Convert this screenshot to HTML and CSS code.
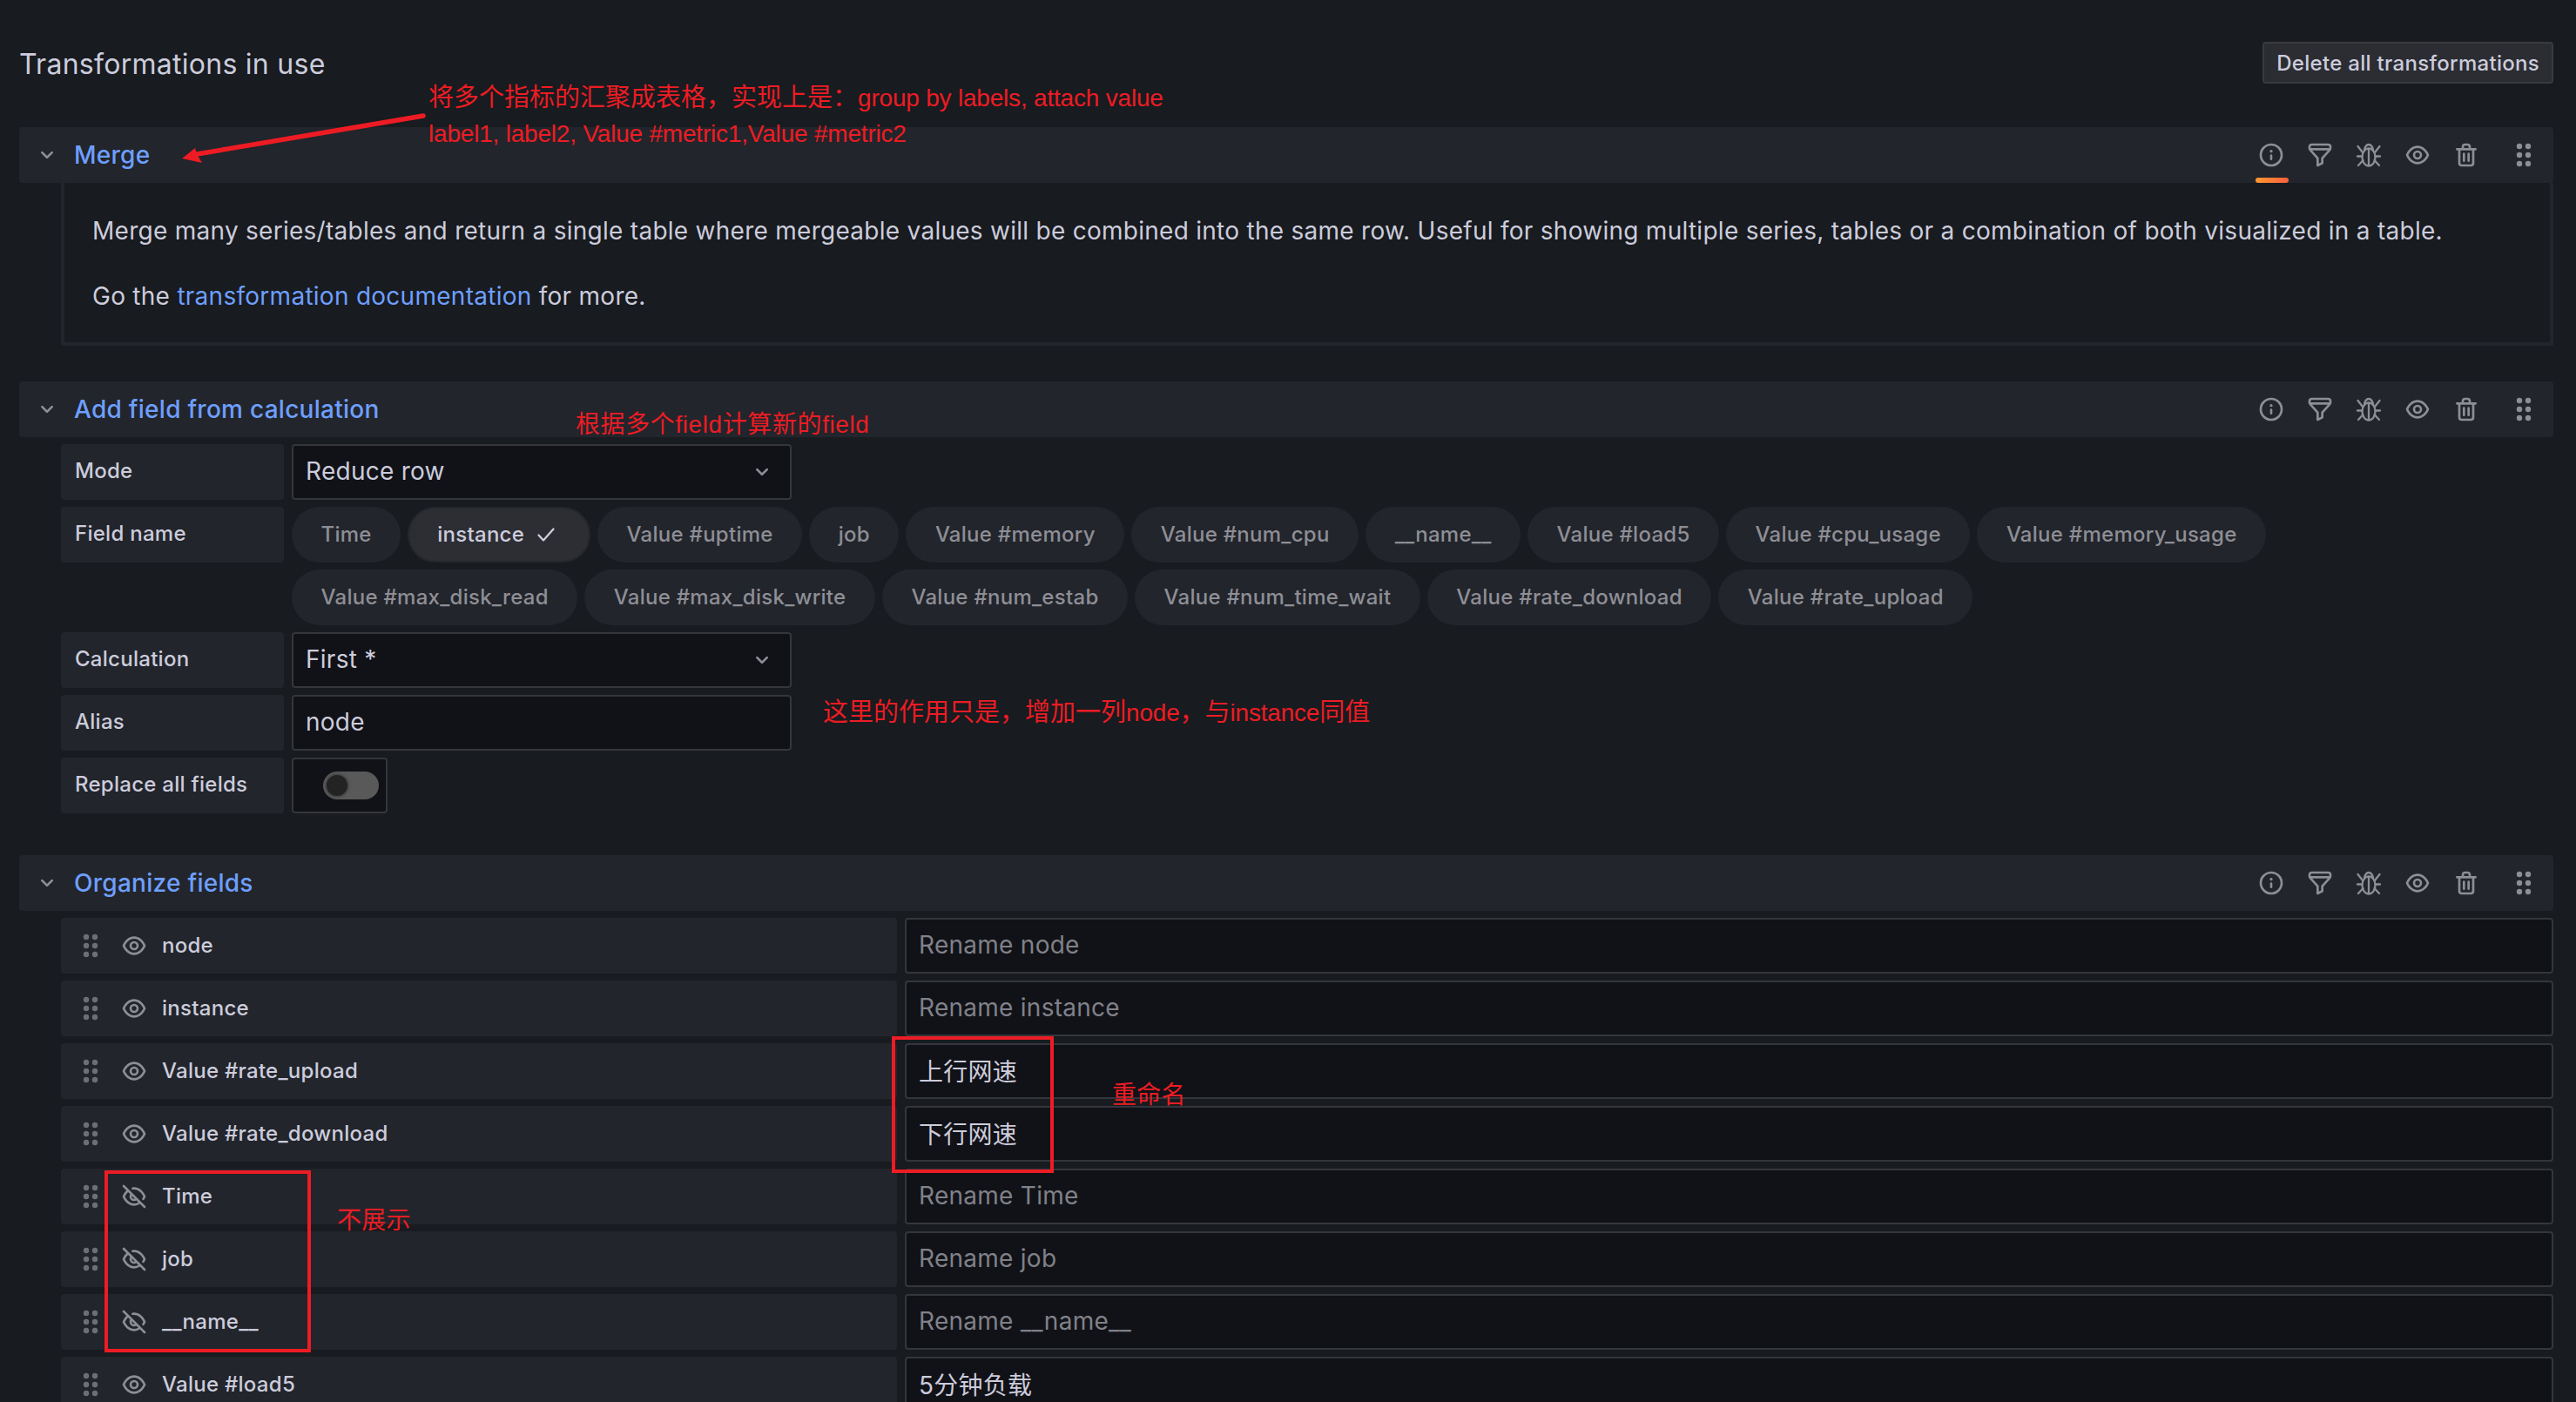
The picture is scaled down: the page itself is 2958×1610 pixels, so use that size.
FILE: index.html
```html
<!DOCTYPE html>
<html>
<head lang="en">
    <meta charset="UTF-8">
    <title>Transformations in use</title>
    <link rel="stylesheet" href="styles.css">
</head>
<body>
<svg class="sprite" xmlns="http://www.w3.org/2000/svg">
    <symbol id="i-chevron" viewBox="0 0 24 24"><path d="M17,9.17a1,1,0,0,0-1.41,0L12,12.71,8.46,9.17a1,1,0,0,0-1.41,0,1,1,0,0,0,0,1.42l4.24,4.24a1,1,0,0,0,1.42,0L17,10.59A1,1,0,0,0,17,9.17Z"/></symbol>
    <symbol id="i-info" viewBox="0 0 24 24"><path d="M12,2A10,10,0,1,0,22,12,10.01114,10.01114,0,0,0,12,2Zm0,18a8,8,0,1,1,8-8A8.00917,8.00917,0,0,1,12,20Zm0-8.5a1,1,0,0,0-1,1v3a1,1,0,0,0,2,0v-3A1,1,0,0,0,12,11.5Zm0-4a1.25,1.25,0,1,0,1.25,1.25A1.25,1.25,0,0,0,12,7.5Z"/></symbol>
    <symbol id="i-filter" viewBox="0 0 24 24"><path d="M19,2H5A3,3,0,0,0,2,5V6.17a3,3,0,0,0,.17,1V7.2a2.82,2.82,0,0,0,.53.88L9,15.13V21a1,1,0,0,0,.47.85A1,1,0,0,0,10,22a1,1,0,0,0,.45-.11l4-2A1,1,0,0,0,15,19V15.13L21.3,8.08a2.82,2.82,0,0,0,.53-.88V7.17a3,3,0,0,0,.17-1V5A3,3,0,0,0,19,2ZM13.25,14.06A1,1,0,0,0,13,14.72v3.66l-2,1V14.72a1,1,0,0,0-.25-.66L5.24,8H18.76ZM20,6H4V5A1,1,0,0,1,5,4H19a1,1,0,0,1,1,1Z"/></symbol>
    <symbol id="i-bug" viewBox="-2 -2 32 32"><g fill="none" stroke="currentColor" stroke-width="2.300" stroke-linecap="round"><ellipse cx="14" cy="16.500" rx="7.500" ry="10"/><path d="M14 7v19M9 9c0-4 2.500-7 5-7s5 3 5 7M1.500 4 7 11M26.500 4 21 11M1 15.500h5.500M27 15.500h-5.500M2 26l5.500-6M26 26l-5.500-6"/></g></symbol>
    <symbol id="i-eye" viewBox="0 0 24 24"><path d="M21.92,11.6C19.9,6.91,16.1,4,12,4S4.1,6.91,2.08,11.6a1,1,0,0,0,0,.8C4.1,17.09,7.9,20,12,20s7.9-2.91,9.92-7.6A1,1,0,0,0,21.92,11.6ZM12,18c-3.17,0-6.17-2.29-7.9-6C5.83,8.29,8.83,6,12,6s6.17,2.29,7.9,6C18.17,15.71,15.17,18,12,18ZM12,8a4,4,0,1,0,4,4A4,4,0,0,0,12,8Zm0,6a2,2,0,1,1,2-2A2,2,0,0,1,12,14Z"/></symbol>
    <symbol id="i-eye-off" viewBox="0 0 24 24"><path d="M10.94,6.08A6.93,6.93,0,0,1,12,6c3.18,0,6.17,2.29,7.91,6a15.23,15.23,0,0,1-.9,1.64,1,1,0,0,0-.16.55,1,1,0,0,0,1.86.5,15.77,15.77,0,0,0,1.21-2.3,1,1,0,0,0,0-.79C19.9,6.91,16.1,4,12,4a7.77,7.77,0,0,0-1.4.12,1,1,0,1,0,.34,2ZM3.71,2.29A1,1,0,0,0,2.29,3.71L5.39,6.8a14.62,14.62,0,0,0-3.31,4.8,1,1,0,0,0,0,.8C4.1,17.09,7.9,20,12,20a9.26,9.26,0,0,0,5.05-1.54l3.24,3.25a1,1,0,0,0,1.42,0,1,1,0,0,0,0-1.42Zm6.36,9.19,2.45,2.45A1.81,1.81,0,0,1,12,14a2,2,0,0,1-2-2A1.81,1.81,0,0,1,10.07,11.48ZM12,18c-3.18,0-6.17-2.29-7.9-6A12.09,12.09,0,0,1,6.8,8.21L8.57,10A4,4,0,0,0,14,15.43L15.59,17A7.24,7.24,0,0,1,12,18Z"/></symbol>
    <symbol id="i-trash" viewBox="0 0 24 24"><path d="M10,18a1,1,0,0,0,1-1V11a1,1,0,0,0-2,0v6A1,1,0,0,0,10,18ZM20,6H16V5a3,3,0,0,0-3-3H11A3,3,0,0,0,8,5V6H4A1,1,0,0,0,4,8H5V19a3,3,0,0,0,3,3h8a3,3,0,0,0,3-3V8h1a1,1,0,0,0,0-2ZM10,5a1,1,0,0,1,1-1h2a1,1,0,0,1,1,1V6H10Zm7,14a1,1,0,0,1-1,1H8a1,1,0,0,1-1-1V8H17Zm-3-1a1,1,0,0,0,1-1V11a1,1,0,0,0-2,0v6A1,1,0,0,0,14,18Z"/></symbol>
    <symbol id="i-drag" viewBox="-2 -2 32 32"><circle cx="9" cy="4" r="3.200"/><circle cx="19" cy="4" r="3.200"/><circle cx="9" cy="14" r="3.200"/><circle cx="19" cy="14" r="3.200"/><circle cx="9" cy="24" r="3.200"/><circle cx="19" cy="24" r="3.200"/></symbol>
    <symbol id="i-check" viewBox="0 0 24 24"><path d="M3.500 12.500 9 18.500 20.500 5.500" fill="none" stroke="currentColor" stroke-width="2.300" stroke-linecap="round" stroke-linejoin="round"/></symbol>
</svg>

<div class="page">
    <div class="top">
        <h2 class="page-title">Transformations in use</h2>
        <button class="btn-delete">Delete all transformations</button>
    </div>

    <div class="card-head">
        <svg class="chev"><use href="#i-chevron"/></svg>
        <span class="card-title">Merge</span>
        <div class="actions">
            <span class="act act-on"><svg class="ico"><use href="#i-info"/></svg></span>
            <span class="act"><svg class="ico"><use href="#i-filter"/></svg></span>
            <span class="act"><svg class="ico"><use href="#i-bug"/></svg></span>
            <span class="act"><svg class="ico"><use href="#i-eye"/></svg></span>
            <span class="act"><svg class="ico"><use href="#i-trash"/></svg></span>
            <span class="act act-drag"><svg class="ico"><use href="#i-drag"/></svg></span>
        </div>
    </div>
    <div class="help">
        <p>Merge many series/tables and return a single table where mergeable values will be combined into the same row. Useful for showing multiple series, tables or a combination of both visualized in a table.</p>
        <p>Go the <a href="#">transformation documentation</a> for more.</p>
    </div>

    <div class="card-head">
        <svg class="chev"><use href="#i-chevron"/></svg>
        <span class="card-title">Add field from calculation</span>
        <div class="actions">
            <span class="act"><svg class="ico"><use href="#i-info"/></svg></span>
            <span class="act"><svg class="ico"><use href="#i-filter"/></svg></span>
            <span class="act"><svg class="ico"><use href="#i-bug"/></svg></span>
            <span class="act"><svg class="ico"><use href="#i-eye"/></svg></span>
            <span class="act"><svg class="ico"><use href="#i-trash"/></svg></span>
            <span class="act act-drag"><svg class="ico"><use href="#i-drag"/></svg></span>
        </div>
    </div>
    <div class="form">
        <div class="row">
            <div class="label">Mode</div>
            <div class="input input-short"><span class="val">Reduce row</span><svg class="chev chev-end"><use href="#i-chevron"/></svg></div>
        </div>
        <div class="row">
            <div class="label">Field name</div>
            <div class="chips">
                <span class="chip">Time</span>
                <span class="chip chip-on">instance<svg class="chip-check"><use href="#i-check"/></svg></span>
                <span class="chip">Value #uptime</span>
                <span class="chip">job</span>
                <span class="chip">Value #memory</span>
                <span class="chip">Value #num_cpu</span>
                <span class="chip">__name__</span>
                <span class="chip">Value #load5</span>
                <span class="chip">Value #cpu_usage</span>
                <span class="chip">Value #memory_usage</span>
                <span class="chip">Value #max_disk_read</span>
                <span class="chip">Value #max_disk_write</span>
                <span class="chip">Value #num_estab</span>
                <span class="chip">Value #num_time_wait</span>
                <span class="chip">Value #rate_download</span>
                <span class="chip">Value #rate_upload</span>
            </div>
        </div>
        <div class="row">
            <div class="label">Calculation</div>
            <div class="input input-short"><span class="val">First *</span><svg class="chev chev-end"><use href="#i-chevron"/></svg></div>
        </div>
        <div class="row">
            <div class="label">Alias</div>
            <div class="input input-short"><span class="val">node</span></div>
        </div>
        <div class="row">
            <div class="label">Replace all fields</div>
            <div class="switch-box"><span class="switch"></span></div>
        </div>
    </div>

    <div class="card-head">
        <svg class="chev"><use href="#i-chevron"/></svg>
        <span class="card-title">Organize fields</span>
        <div class="actions">
            <span class="act"><svg class="ico"><use href="#i-info"/></svg></span>
            <span class="act"><svg class="ico"><use href="#i-filter"/></svg></span>
            <span class="act"><svg class="ico"><use href="#i-bug"/></svg></span>
            <span class="act"><svg class="ico"><use href="#i-eye"/></svg></span>
            <span class="act"><svg class="ico"><use href="#i-trash"/></svg></span>
            <span class="act act-drag"><svg class="ico"><use href="#i-drag"/></svg></span>
        </div>
    </div>
    <div class="form form-fields">
        <div class="row">
            <div class="field"><svg class="grip"><use href="#i-drag"/></svg><svg class="eye"><use href="#i-eye"/></svg><span class="val">node</span></div>
            <div class="input input-wide muted"><span class="val">Rename node</span></div>
        </div>
        <div class="row">
            <div class="field"><svg class="grip"><use href="#i-drag"/></svg><svg class="eye"><use href="#i-eye"/></svg><span class="val">instance</span></div>
            <div class="input input-wide muted"><span class="val">Rename instance</span></div>
        </div>
        <div class="row">
            <div class="field"><svg class="grip"><use href="#i-drag"/></svg><svg class="eye"><use href="#i-eye"/></svg><span class="val">Value #rate_upload</span></div>
            <div class="input input-wide"><span class="val">上行网速</span></div>
        </div>
        <div class="row">
            <div class="field"><svg class="grip"><use href="#i-drag"/></svg><svg class="eye"><use href="#i-eye"/></svg><span class="val">Value #rate_download</span></div>
            <div class="input input-wide"><span class="val">下行网速</span></div>
        </div>
        <div class="row">
            <div class="field"><svg class="grip"><use href="#i-drag"/></svg><svg class="eye"><use href="#i-eye-off"/></svg><span class="val">Time</span></div>
            <div class="input input-wide muted"><span class="val">Rename Time</span></div>
        </div>
        <div class="row">
            <div class="field"><svg class="grip"><use href="#i-drag"/></svg><svg class="eye"><use href="#i-eye-off"/></svg><span class="val">job</span></div>
            <div class="input input-wide muted"><span class="val">Rename job</span></div>
        </div>
        <div class="row">
            <div class="field"><svg class="grip"><use href="#i-drag"/></svg><svg class="eye"><use href="#i-eye-off"/></svg><span class="val">__name__</span></div>
            <div class="input input-wide muted"><span class="val">Rename __name__</span></div>
        </div>
        <div class="row">
            <div class="field"><svg class="grip"><use href="#i-drag"/></svg><svg class="eye"><use href="#i-eye"/></svg><span class="val">Value #load5</span></div>
            <div class="input input-wide"><span class="val">5分钟负载</span></div>
        </div>
    </div>

    <!-- red notes drawn on top of the screenshot -->
    <div class="note note-merge">将多个指标的汇聚成表格&#65292;实现上是&#65306;<span class="lat">group by labels, attach value</span><br><span class="lat">label1, label2, Value #metric1,Value #metric2</span></div>
    <div class="note note-calc">根据多个field计算新的field</div>
    <div class="note note-alias">这里的作用只是&#65292;增加一列<span class="lat">node</span>&#65292;与<span class="lat">instance</span>同值</div>
    <div class="note note-rename">重命名</div>
    <div class="note note-hide">不展示</div>
    <div class="mark mark-rename"></div>
    <div class="mark mark-hide"></div>
    <svg class="arrow" viewBox="0 0 290 60"><path d="M278 3 18 47" stroke="#ed1c24" stroke-width="5.500" stroke-linecap="round" fill="none"/><path d="M1 52 16 40 18 47 24 57Z" fill="#ed1c24"/></svg>
</div>
</body>
</html>
```

FILE: styles.css
```css
*{
    margin: 0;
    padding: 0;
    box-sizing: border-box;
}
body{
    background: #181b1f;
    color: #ccccdc;
    font-family: Inter, "Noto Sans CJK SC", sans-serif;
    font-size: 28px;
    letter-spacing: 0.27px;
}
.sprite{
    display: none;
}
.page{
    position: relative;
    height: 1610px;
    overflow: hidden;
    padding: 48px 26px 0 22px;
}
.top{
    display: flex;
    justify-content: space-between;
    align-items: center;
    height: 48px;
    margin-bottom: 50px;
}
.page-title{
    margin-top: 3px;
    font-size: 32px;
    font-weight: 400;
    line-height: 48px;
}
.btn-delete{
    height: 48px;
    padding: 0 14px;
    background: #2b2d33;
    border: 2px solid #393b41;
    border-radius: 4px;
    color: #ccccdc;
    font-family: inherit;
    font-size: 24px;
    font-weight: 500;
    letter-spacing: 0.3px;
}

.card-head{
    display: flex;
    align-items: center;
    height: 64px;
    padding-left: 16px;
    background: #22252b;
    border-radius: 4px;
}
.chev{
    width: 32px;
    height: 32px;
    fill: #8e8e96;
    flex: none;
}
.card-title{
    margin-left: 15px;
    color: #6e9fff;
    font-weight: 500;
}
.actions{
    display: flex;
    margin-left: auto;
    padding-right: 18px;
}
.act{
    position: relative;
    display: flex;
    width: 32px;
    height: 32px;
    margin-left: 24px;
}
.act-drag{
    margin-left: 34px;
}
.act-on::after{
    content: "";
    position: absolute;
    left: -2px;
    top: 42px;
    width: 38px;
    height: 6px;
    border-radius: 3px;
    background: linear-gradient(90deg, #ff9830, #f55f3e);
}
.ico{
    width: 32px;
    height: 32px;
    fill: #8e8e96;
    color: #8e8e96;
}

.help{
    height: 187px;
    margin-left: 48px;
    margin-bottom: 41px;
    padding: 34px 32px 0 32px;
    border-left: 4px solid #22252b;
    border-right: 4px solid #22252b;
    border-bottom: 4px solid #22252b;
    line-height: 42px;
}
.help p{
    margin-bottom: 33px;
}
.help a{
    color: #6e9fff;
    text-decoration: none;
}

.form{
    margin-left: 48px;
    padding-top: 8px;
    margin-bottom: 48px;
}
.row{
    display: flex;
    align-items: flex-start;
    gap: 9px;
    margin-bottom: 8px;
}
.label{
    flex: none;
    width: 256px;
    height: 64px;
    padding-left: 16px;
    background: #22252b;
    border-radius: 4px;
    font-size: 24px;
    font-weight: 500;
    line-height: 62px;
}
.input{
    display: flex;
    align-items: center;
    height: 64px;
    padding: 0 16px 0 14px;
    background: #111217;
    border: 2px solid #34363b;
    border-radius: 4px;
}
.input-short{
    width: 574px;
}
.input-wide{
    flex: 1;
}
.muted{
    color: #808189;
}
.val{
    margin-top: -2px;
}
.chev-end{
    margin-left: auto;
}

.chips{
    display: flex;
    flex-wrap: wrap;
    gap: 8px;
}
.chip{
    display: flex;
    align-items: center;
    height: 64px;
    padding: 0 33.5px 2px;
    background: #22252b;
    border-radius: 32px;
    color: #8e8e96;
    font-size: 24px;
    font-weight: 500;
}
.chip-on{
    padding: 0 37px 2px 32px;
    background: #2c2e34;
    border: 2px solid #25272d;
    color: #ccccdc;
}
.chip-check{
    width: 24px;
    height: 24px;
    margin-top: 2px;
    margin-left: 13px;
    color: #ccccdc;
}

.switch-box{
    display: flex;
    align-items: center;
    width: 110px;
    height: 64px;
    padding-left: 34px;
    background: #111217;
    border: 2px solid #34363b;
    border-radius: 4px;
}
.switch{
    position: relative;
    display: block;
    width: 64px;
    height: 32px;
    border-radius: 16px;
    background: #595959;
}
.switch::after{
    content: "";
    position: absolute;
    left: 4px;
    top: 4px;
    width: 24px;
    height: 24px;
    border-radius: 50%;
    background: #232324;
    box-shadow: 0 0 3px 1px #3a3a3c;
}

.field{
    display: flex;
    align-items: center;
    flex: none;
    width: 960px;
    height: 64px;
    padding-left: 18px;
    background: #22252b;
    border-radius: 4px;
    font-size: 24px;
    font-weight: 500;
}
.grip{
    width: 32px;
    height: 32px;
    fill: #6e6f76;
}
.eye{
    width: 32px;
    height: 32px;
    margin-left: 18px;
    margin-right: 16px;
    fill: #8e8e96;
}

.note{
    position: absolute;
    color: #ed1c24;
    font-family: "Liberation Sans", "Noto Sans CJK SC", sans-serif;
    font-size: 28px;
    line-height: 40px;
    letter-spacing: 0;
    white-space: nowrap;
}
.lat{
    font-size: 28px;
    letter-spacing: -0.2px;
}
.note-merge{
    left: 492px;
    top: 92px;
    font-size: 29px;
}
.note-calc{
    left: 661px;
    top: 468px;
    letter-spacing: 0.6px;
}
.note-alias{
    left: 945px;
    top: 798px;
    font-size: 29px;
}
.note-rename{
    left: 1277px;
    top: 1238px;
    letter-spacing: 0.3px;
}
.note-hide{
    left: 387px;
    top: 1382px;
    letter-spacing: 0.3px;
}
.mark{
    position: absolute;
    border: 4px solid #ed1c24;
}
.mark-rename{
    left: 1024px;
    top: 1190px;
    width: 186px;
    height: 157px;
}
.mark-hide{
    left: 120px;
    top: 1344px;
    width: 237px;
    height: 209px;
}
.arrow{
    position: absolute;
    left: 208px;
    top: 130px;
    width: 290px;
    height: 60px;
}
```
